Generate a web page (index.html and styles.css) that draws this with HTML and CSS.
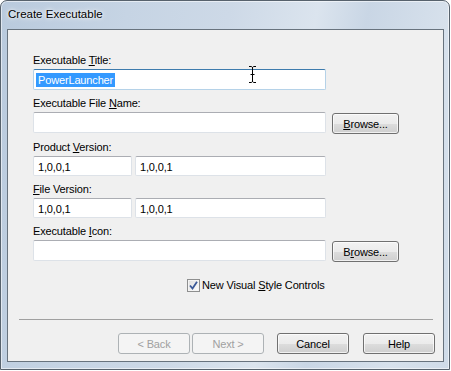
FILE: index.html
```html
<!DOCTYPE html>
<html>
<head>
<meta charset="utf-8">
<link rel="stylesheet" href="styles.css">
</head>
<body>
<div class="window">
  <div class="titlebar">Create Executable</div>
  <div class="client">
    <div class="form">
      <div class="group">
        <div class="lbl">Executable <u>T</u>itle:</div>
        <div class="row"><div class="field wide focus"><span class="sel">PowerLauncher</span></div></div>
      </div>
      <div class="group">
        <div class="lbl">Executable File <u>N</u>ame:</div>
        <div class="row"><div class="field wide"></div><button class="btn browse"><u>B</u>rowse...</button></div>
      </div>
      <div class="group ver">
        <div class="lbl">Product <u>V</u>ersion:</div>
        <div class="row"><div class="field small">1,0,0,1</div><div class="field medium">1,0,0,1</div></div>
      </div>
      <div class="group ver">
        <div class="lbl"><u>F</u>ile Version:</div>
        <div class="row"><div class="field small">1,0,0,1</div><div class="field medium">1,0,0,1</div></div>
      </div>
      <div class="group last">
        <div class="lbl">Executable <u>I</u>con:</div>
        <div class="row"><div class="field wide"></div><button class="btn browse">B<u>r</u>owse...</button></div>
      </div>
    </div>
    <div class="check-row">
      <span class="checkbox">
        <svg width="9" height="9" viewBox="0 0 9 9"><path d="M1 4.5 L3.5 7.5 L8 0.8" fill="none" stroke="#3b5998" stroke-width="1.8"/></svg>
      </span>
      <span class="check-label">New Visual <u>S</u>tyle Controls</span>
    </div>
    <div class="sep"></div>
    <div class="buttons">
      <button class="btn nav disabled">&lt; Back</button>
      <button class="btn nav disabled next">Next &gt;</button>
      <button class="btn nav cancel">Cancel</button>
      <button class="btn nav help">Help</button>
    </div>
  </div>
  <svg class="ibeam" width="9" height="17" viewBox="0 0 9 17"><path d="M1 0.5 H3.5 M5.5 0.5 H8 M3.5 0.5 Q4.5 1 4.5 2 V15 Q4.5 16 3.5 16.5 H1 M5.5 0.5 Q4.5 1 4.5 2 M4.5 15 Q4.5 16 5.5 16.5 H8 M2.5 8.5 H6.5" fill="none" stroke="#000" stroke-width="1"/></svg>
</div>
</body>
</html>
```
FILE: styles.css
```css
* { box-sizing: border-box; }
body {
  margin: 0;
  background: #ffffff;
  font-family: "Liberation Sans", Arial, sans-serif;
  font-size: 11px;
  letter-spacing: -0.15px;
  color: #000;
}
.window {
  position: relative;
  width: 450px;
  height: 370px;
  border: 1px solid #57626d;
  border-radius: 7px 7px 0 0;
  background: linear-gradient(100deg, #b9cadd 0%, #c6d4e4 25%, #cdd9e7 45%, #dbe4ee 62%, #c9d6e5 72%, #d7e1ec 88%, #cfdbe8 100%);
  box-shadow: inset 0 0 0 1px rgba(255,255,255,0.55);
}
.titlebar {
  height: 28px;
  padding: 7px 0 0 7px;
  line-height: 13px;
  font-size: 11.5px;
  letter-spacing: 0;
  color: #000;
  text-shadow: 0 0 6px #fff, 0 0 3px #fff;
}
.client {
  margin-left: 6px;
  width: 437px;
  height: 333px;
  border: 1px solid #68737e;
  background: #f0f0f0;
  padding-top: 23px;
}
.form { padding-left: 25px; }
.group { margin-bottom: 6px; }
.group.ver { margin-bottom: 6px; }
.group.last { margin-bottom: 0; }
.lbl {
  height: 14px;
  line-height: 14px;
  margin-bottom: 2px;
}
.row { display: flex; align-items: flex-start; }
.field {
  height: 21px;
  background: #fff;
  border: 1px solid #dde2e8;
  border-top-color: #abadb3;
  border-radius: 2px;
  padding: 3px 0 0 4px;
  line-height: 14px;
  white-space: nowrap;
}
.ver .field { height: 20px; }
.field.wide { width: 293px; }
.field.small { width: 99px; }
.field.medium { width: 191px; margin-left: 3px; }
.field.focus {
  border-color: #b5d2e8;
  border-top-color: #3d7bad;
  padding-left: 2px;
}
.sel {
  display: inline-block;
  background: #3399ff;
  color: #fff;
  padding: 0 2px;
  height: 14px;
  line-height: 14px;
}
.btn {
  font-family: "Liberation Sans", Arial, sans-serif;
  font-size: 11px;
  letter-spacing: -0.15px;
  color: #000;
  height: 21px;
  border: 1px solid #707070;
  border-radius: 3px;
  background: linear-gradient(#f2f2f2 0%, #ebebeb 50%, #dddddd 51%, #cfcfcf 100%);
  box-shadow: inset 0 0 0 1px rgba(255,255,255,0.7);
  padding: 0;
  line-height: 18px;
  text-align: center;
}
.browse { width: 67px; margin-left: 6px; margin-top: 1px; }
.check-row {
  display: flex;
  align-items: center;
  margin-top: 17px;
  padding-left: 179px;
  height: 13px;
}
.checkbox {
  width: 13px;
  height: 13px;
  border: 1px solid #8e8f8f;
  background: linear-gradient(135deg, #dcdcdc, #ffffff);
  box-shadow: inset 0 0 0 1px #f4f4f4;
  display: flex;
  align-items: center;
  justify-content: center;
}
.checkbox svg { display: block; }
.check-label { margin-left: 2px; line-height: 13px; }
.sep {
  margin: 27px 0 0 11px;
  width: 414px;
  height: 1px;
  background: #a0a0a0;
}
.buttons {
  display: flex;
  justify-content: flex-end;
  padding-right: 8px;
  margin-top: 13px;
}
.nav { width: 72px; }
.next { margin-left: 2px; }
.cancel { margin-left: 13px; }
.help { margin-left: 14px; }
.disabled {
  color: #a0a0a0;
  border-color: #adb2b5;
  background: #f4f4f4;
  box-shadow: none;
}
.ibeam {
  position: absolute;
  left: 247px;
  top: 65px;
}
```
